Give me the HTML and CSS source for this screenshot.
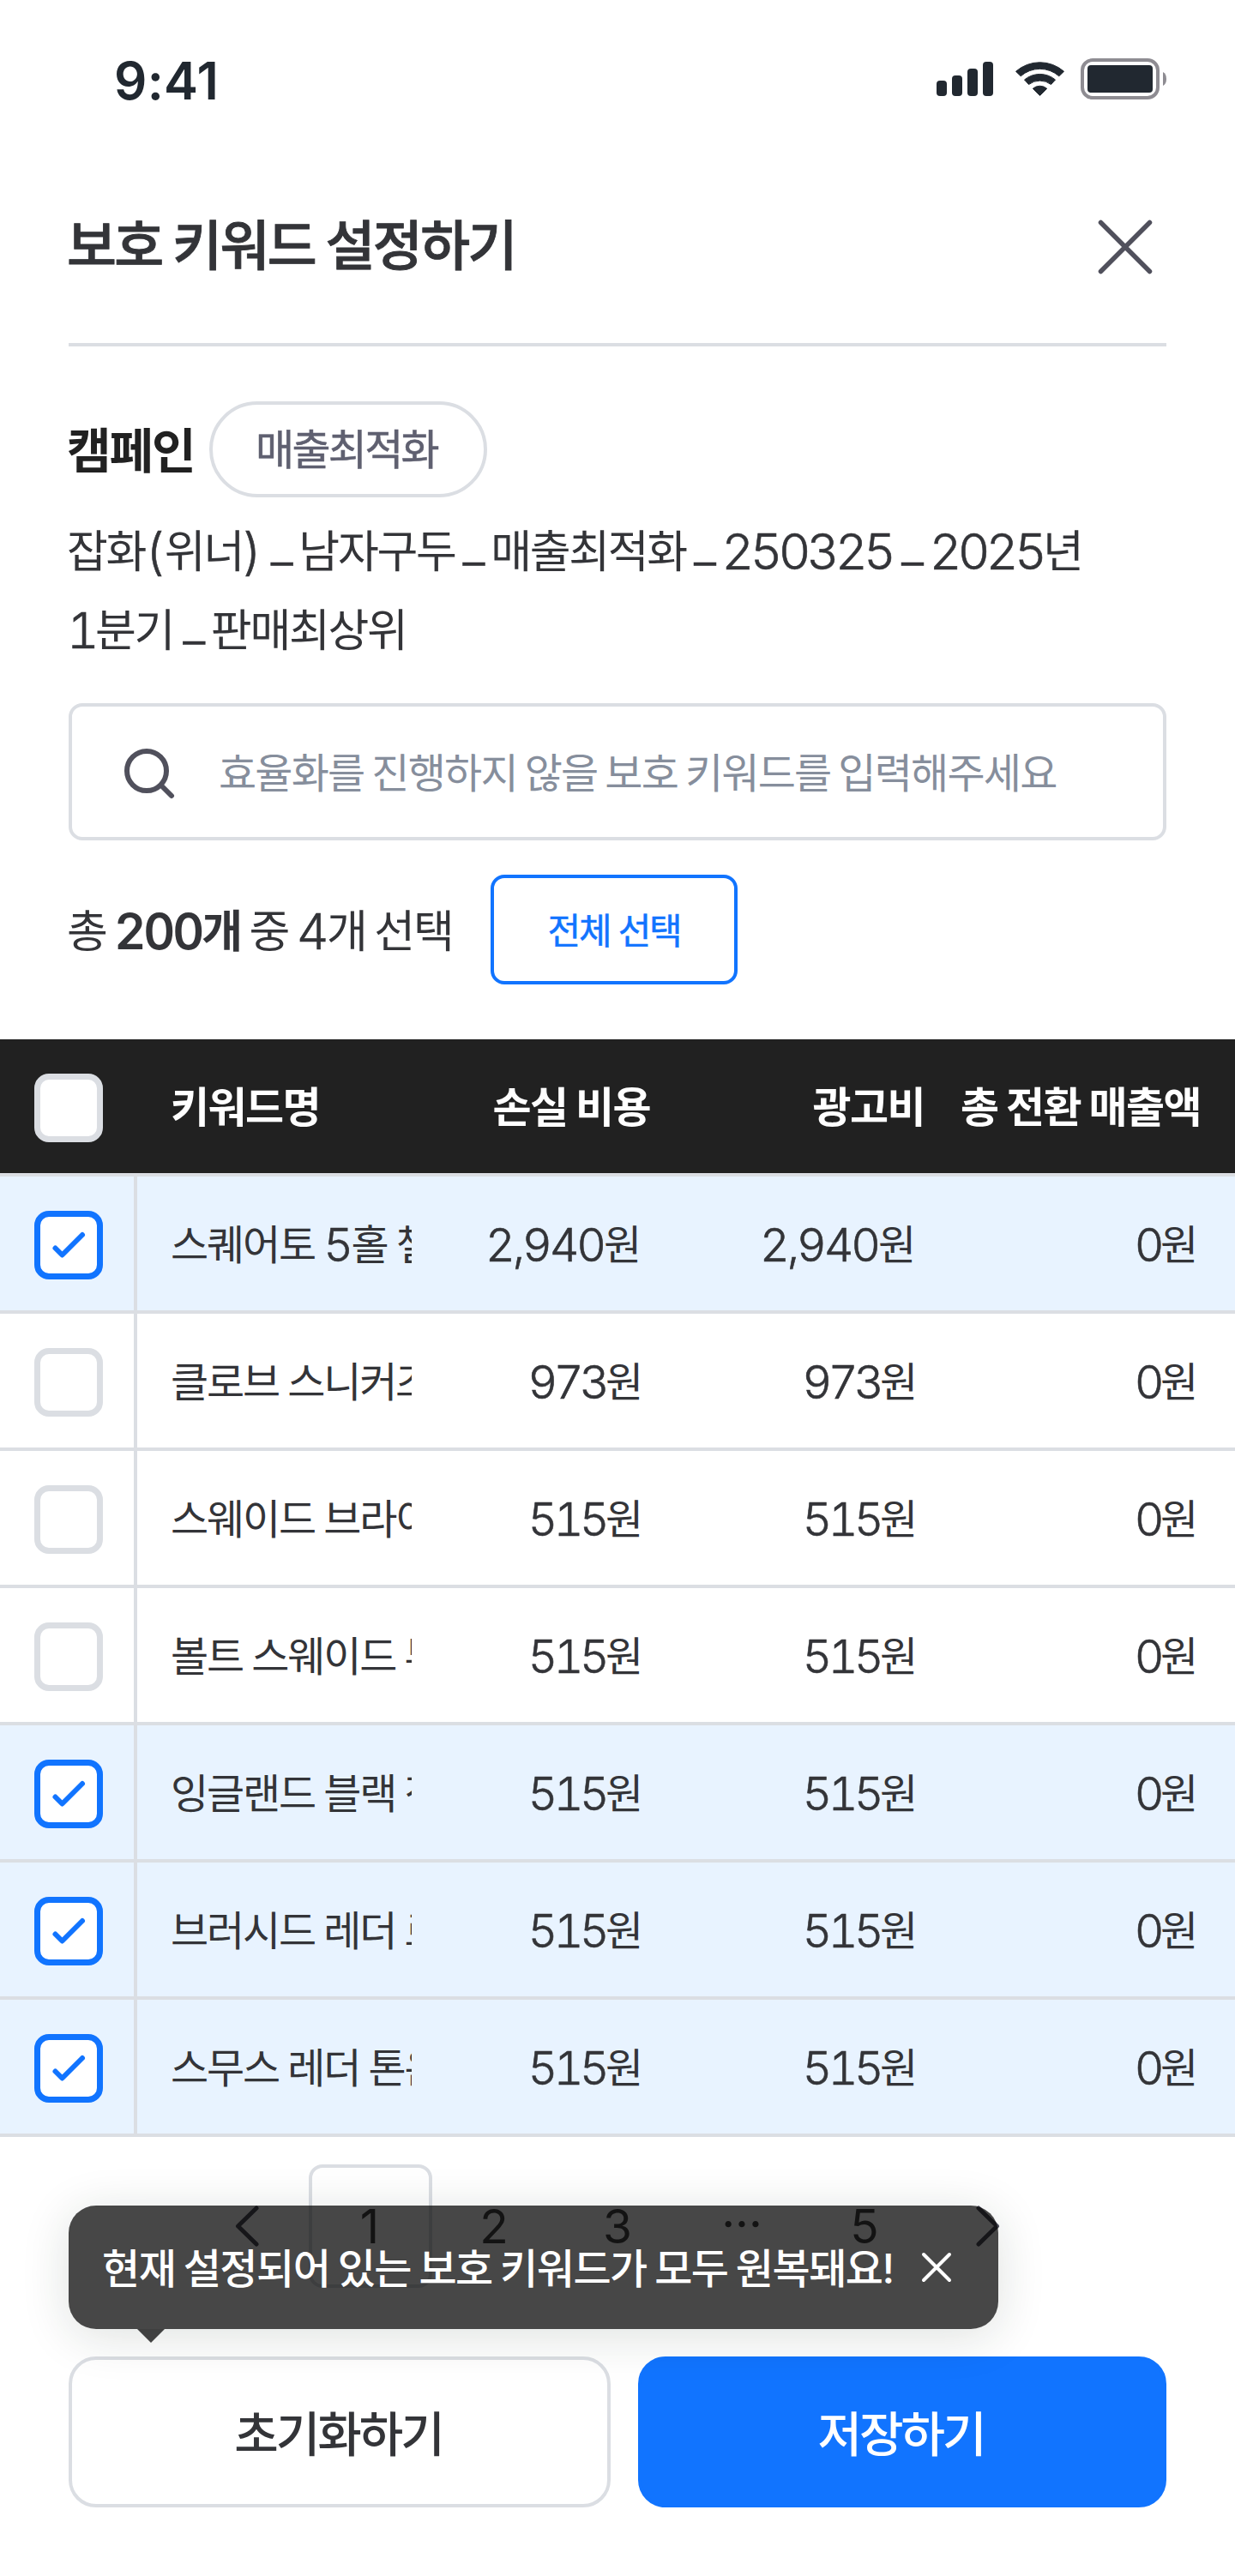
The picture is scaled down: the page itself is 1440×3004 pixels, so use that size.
FILE: index.html
```html
<!DOCTYPE html>
<html lang="ko">
<head>
    <meta charset="UTF-8">
    <meta name="viewport" content="width=device-width, initial-scale=1.0">
    <title>보호 키워드 설정하기</title>
    <link rel="stylesheet" href="styles.css">
</head>
<body>
    <div class="status-bar">
        <span class="time">9:41</span>
        <svg class="status-icons" width="268" height="48" viewBox="0 0 268 48" fill="#212830">
            <rect x="0" y="26" width="12" height="18" rx="4"/>
            <rect x="18" y="20" width="12" height="24" rx="4"/>
            <rect x="36" y="12" width="12" height="32" rx="4"/>
            <rect x="54" y="4" width="12" height="40" rx="4"/>
            <path d="M92.5 15.3A42.4 42.4 0 0 1 148.5 15.3L142.8 20.8A33.7 33.7 0 0 0 98.2 20.8Z" stroke="#212830" stroke-linejoin="round"/>
            <path d="M102.5 25A28 28 0 0 1 138.5 25L133.5 30.5A21.5 21.5 0 0 0 107.5 30.5Z" stroke="#212830" stroke-linejoin="round"/>
            <path d="M112.3 35.3A12.5 12.5 0 0 1 128.7 35.3L120.5 43.5Z" stroke="#212830" stroke-linejoin="round"/>
            <rect x="170" y="2" width="88" height="44" rx="12" fill="none" stroke="#8e8c92" stroke-width="4"/>
            <rect x="176" y="8" width="76" height="32" rx="4"/>
            <path d="M264 16Q268 18 268 24T264 32Z" fill="#8e8c92"/>
        </svg>
    </div>

    <div class="header">
        <h1>보호 키워드 설정하기</h1>
        <svg class="close" width="96" height="96" viewBox="0 0 96 96" fill="none" stroke="#50505c" stroke-width="5.5" stroke-linecap="round">
            <path d="M19.5 19.5L76.5 76.5M76.5 19.5L19.5 76.5"/>
        </svg>
    </div>

    <div class="content">
        <div class="campaign">
            <span class="campaign-label">캠페인</span>
            <span class="tag">매출최적화</span>
        </div>
        <p class="campaign-name">잡화<span class="num paren">(</span>위너<span class="num paren">)</span><span class="bar">_</span>남자구두<span class="bar">_</span>매출최적화<span class="bar">_</span><span class="num">250325</span><span class="bar">_</span><span class="num">2025</span>년<br><span class="num">1</span>분기<span class="bar">_</span>판매최상위</p>
        <div class="search">
            <svg width="64" height="64" viewBox="0 0 64 64" fill="none" stroke="#50505c" stroke-width="6" stroke-linecap="round">
                <circle cx="29" cy="31" r="23"/>
                <path d="M46 48L58 60"/>
            </svg>
            <span>효율화를 진행하지 않을 보호 키워드를 입력해주세요</span>
        </div>
        <div class="count">
            <span class="count-text">총 <b><span class="num">200</span>개</b> 중 <span class="num">4</span>개 선택</span>
            <button class="select-all">전체 선택</button>
        </div>
    </div>

    <div class="table">
        <div class="row head">
            <div class="cell check"><span class="checkbox"></span></div>
            <div class="cell name">키워드명</div>
            <div class="cell price">손실 비용</div>
            <div class="cell price">광고비</div>
            <div class="cell price">총 전환 매출액</div>
        </div>
        <div class="row selected">
            <div class="cell check"><span class="checkbox"><svg viewBox="0 0 80 80"><path d="M24.5 43.5L32.5 51.5L56 28"/></svg></span></div>
            <div class="cell name">스퀘어토 <span class="num">5</span>홀 첼시부츠</div>
            <div class="cell price thousand"><span class="num">2,940</span>원</div>
            <div class="cell price thousand"><span class="num">2,940</span>원</div>
            <div class="cell price"><span class="num">0</span>원</div>
        </div>
        <div class="row">
            <div class="cell check"><span class="checkbox"></span></div>
            <div class="cell name">클로브 스니커즈</div>
            <div class="cell price"><span class="num">973</span>원</div>
            <div class="cell price"><span class="num">973</span>원</div>
            <div class="cell price"><span class="num">0</span>원</div>
        </div>
        <div class="row">
            <div class="cell check"><span class="checkbox"></span></div>
            <div class="cell name">스웨이드 브라이언</div>
            <div class="cell price"><span class="num">515</span>원</div>
            <div class="cell price"><span class="num">515</span>원</div>
            <div class="cell price"><span class="num">0</span>원</div>
        </div>
        <div class="row">
            <div class="cell check"><span class="checkbox"></span></div>
            <div class="cell name">볼트 스웨이드 부츠</div>
            <div class="cell price"><span class="num">515</span>원</div>
            <div class="cell price"><span class="num">515</span>원</div>
            <div class="cell price"><span class="num">0</span>원</div>
        </div>
        <div class="row selected">
            <div class="cell check"><span class="checkbox"><svg viewBox="0 0 80 80"><path d="M24.5 43.5L32.5 51.5L56 28"/></svg></span></div>
            <div class="cell name">잉글랜드 블랙 정장</div>
            <div class="cell price"><span class="num">515</span>원</div>
            <div class="cell price"><span class="num">515</span>원</div>
            <div class="cell price"><span class="num">0</span>원</div>
        </div>
        <div class="row selected">
            <div class="cell check"><span class="checkbox"><svg viewBox="0 0 80 80"><path d="M24.5 43.5L32.5 51.5L56 28"/></svg></span></div>
            <div class="cell name">브러시드 레더 로퍼</div>
            <div class="cell price"><span class="num">515</span>원</div>
            <div class="cell price"><span class="num">515</span>원</div>
            <div class="cell price"><span class="num">0</span>원</div>
        </div>
        <div class="row selected">
            <div class="cell check"><span class="checkbox"><svg viewBox="0 0 80 80"><path d="M24.5 43.5L32.5 51.5L56 28"/></svg></span></div>
            <div class="cell name">스무스 레더 톤온톤</div>
            <div class="cell price"><span class="num">515</span>원</div>
            <div class="cell price"><span class="num">515</span>원</div>
            <div class="cell price"><span class="num">0</span>원</div>
        </div>
    </div>

    <div class="pagination">
        <a class="page"><svg width="48" height="48" viewBox="0 0 48 48"><path d="M35 3L13.5 24L35 45"/></svg></a>
        <a class="page current">1</a>
        <a class="page">2</a>
        <a class="page">3</a>
        <a class="page dots">···</a>
        <a class="page">5</a>
        <a class="page"><svg width="48" height="48" viewBox="0 0 48 48"><path d="M13 3L34.5 24L13 45"/></svg></a>
    </div>

    <div class="actions">
        <div class="tooltip">
            <span>현재 설정되어 있는 보호 키워드가 모두 원복돼요!</span>
            <svg width="40" height="40" viewBox="0 0 40 40" fill="none" stroke="#fff" stroke-width="4" stroke-linecap="round">
                <path d="M5 5L35 35M35 5L5 35"/>
            </svg>
        </div>
        <button class="reset">초기화하기</button>
        <button class="save">저장하기</button>
    </div>
</body>
</html>
```
FILE: styles.css
```css
* {
    box-sizing: border-box;
    word-spacing: -0.058em;
}
body {
    margin: 0;
    background-color: #fff;
    color: #333438;
    font-family: Inter, "Noto Sans CJK KR", sans-serif;
    width: 1440px;
    height: 3004px;
    overflow: hidden;
}
button {
    font-family: inherit;
    background-color: #fff;
    padding: 0;
}
/* latin glyphs sit smaller than hangul, scale them up */
.num {
    font-size: 1.12em;
    font-weight: 300;
    font-variant-numeric: tabular-nums;
    letter-spacing: -4.6px;
    line-height: 0;
    vertical-align: -2px;
    -webkit-text-stroke: 0.6px #333438;
}
.status-bar {
    display: flex;
    justify-content: space-between;
    align-items: center;
    height: 184px;
    padding: 0 80px 0 133px;
}
.time {
    font-size: 60px;
    font-weight: 600;
    color: #212830;
    line-height: 60px;
    padding-top: 4px;
    letter-spacing: 0.3px;
}
.header {
    display: flex;
    justify-content: space-between;
    align-items: center;
    height: 220px;
    margin: 0 80px;
    padding-bottom: 4px;
    border-bottom: 4px solid #dbdee3;
}
.header h1 {
    margin: 0 0 0 -2px;
    padding-bottom: 8px;
    font-size: 63px;
    font-weight: 500;
    line-height: 80px;
    letter-spacing: -2.6px;
    word-spacing: -0.03em;
    -webkit-text-stroke: 0.9px #333438;
}
.header .close {
    margin-bottom: 4px;
}
.content {
    padding: 64px 80px;
}
.campaign {
    display: flex;
    align-items: center;
    height: 112px;
}
.campaign-label {
    width: 166px;
    margin-left: -2px;
    padding-bottom: 5px;
    font-size: 56px;
    font-weight: 700;
    letter-spacing: -2px;
    color: #212121;
}
.tag {
    width: 324px;
    height: 112px;
    padding-left: 50px;
    border: 4px solid #dbdee3;
    border-radius: 56px;
    font-size: 49px;
    line-height: 105px;
    letter-spacing: -2.7px;
    color: #5f6070;
    -webkit-text-stroke: 0.5px #5f6070;
}
.campaign-name {
    margin: 18px 0 38px -2px;
    font-size: 52px;
    line-height: 92px;
    letter-spacing: -2.3px;
    white-space: nowrap;
}
.num.paren {
    letter-spacing: 0;
}
.bar {
    font-size: 58px;
    font-weight: 300;
    line-height: 0;
    vertical-align: 6px;
    margin: 0 9px;
    -webkit-text-stroke: 0.5px #333438;
}
.num + .bar {
    margin-left: 11px;
}
.paren + .bar {
    margin-left: 10px;
}
.search {
    display: flex;
    align-items: center;
    gap: 49px;
    height: 160px;
    padding: 0 58px;
    border: 4px solid #dbdee3;
    border-radius: 16px;
    font-size: 48px;
    letter-spacing: -1.8px;
    color: #868e9c;
    white-space: nowrap;
}
.search span {
    padding-bottom: 4px;
}
.count {
    display: flex;
    align-items: center;
    margin-top: 40px;
    height: 128px;
}
.count-text {
    width: 494px;
    margin-left: -2px;
    padding-bottom: 4px;
    font-size: 52px;
    letter-spacing: -2.1px;
    white-space: nowrap;
}
.count-text .num {
    letter-spacing: -2.5px;
}
.count-text b {
    font-weight: 600;
}
.count-text b .num {
    font-size: 1.1em;
    font-weight: 600;
    letter-spacing: -3px;
    -webkit-text-stroke: 0;
}
.select-all {
    width: 288px;
    height: 128px;
    padding-bottom: 4px;
    border: 4px solid #1174ff;
    border-radius: 16px;
    font-size: 42px;
    letter-spacing: -2.3px;
    word-spacing: 0;
    color: #1174ff;
    -webkit-text-stroke: 0.5px #1174ff;
}
.row {
    display: grid;
    grid-template-columns: 160px repeat(4, 320px);
    grid-template-rows: 156px;
    height: 160px;
    border-bottom: 4px solid #dbdee3;
}
.row.head {
    background-color: #212121;
    color: #fff;
    font-weight: 700;
}
.row.selected {
    background-color: #e8f3ff;
}
.cell {
    font-size: 48px;
    line-height: 159px;
    letter-spacing: -2.2px;
    word-spacing: -0.02em;
    white-space: pre;
    overflow: hidden;
}
.head .cell {
    font-size: 49px;
    letter-spacing: -1.6px;
    word-spacing: -0.01em;
}
.cell.check {
    display: flex;
    align-items: center;
    padding: 4px 0 0 40px;
    border-right: 4px solid #dbdee3;
}
.head .cell.check {
    border-right: none;
}
.name {
    padding-left: 39px;
}
.name .num {
    letter-spacing: -2.5px;
}
.price {
    padding-right: 52px;
    text-align: right;
}
.thousand {
    padding-right: 54px;
}
.thousand .num {
    letter-spacing: -3.1px;
}
.price:last-child {
    padding-right: 45px;
}
.head .price {
    padding-right: 42px;
}
.head .price:last-child {
    padding-right: 40px;
}
.checkbox {
    width: 80px;
    height: 80px;
    border: 7px solid #dbdee3;
    border-radius: 17px;
    background-color: #fff;
}
.selected .checkbox {
    border-color: #1174ff;
}
.checkbox svg {
    display: block;
    width: 80px;
    height: 80px;
    margin: -7px;
    fill: none;
    stroke: #1174ff;
    stroke-width: 6;
    stroke-linecap: round;
    stroke-linejoin: round;
}
.pagination {
    display: flex;
    justify-content: center;
    margin-top: 32px;
}
.page {
    display: flex;
    align-items: center;
    justify-content: center;
    width: 144px;
    height: 144px;
    font-size: 55px;
    color: #474747;
}
.page.current {
    border: 4px solid #dbdee3;
    border-radius: 16px;
    padding-right: 2px;
}
.page.dots {
    padding: 0 0 6px 2px;
}
.page svg {
    fill: none;
    stroke: #50505c;
    stroke-width: 5;
    stroke-linecap: round;
    stroke-linejoin: round;
}
.actions {
    position: relative;
    display: flex;
    gap: 32px;
    margin: 80px 80px 0;
}
.tooltip {
    position: absolute;
    left: 0;
    bottom: calc(100% + 32px);
    display: flex;
    align-items: center;
    gap: 30px;
    width: 1084px;
    height: 144px;
    padding-left: 39px;
    border-radius: 32px;
    background-color: rgba(0, 0, 0, 0.72);
    box-shadow: 0 8px 56px rgba(20, 40, 30, 0.14);
    color: #fff;
    font-size: 48px;
    font-weight: 500;
    letter-spacing: -1.5px;
    white-space: nowrap;
}
.tooltip span {
    padding-bottom: 5px;
    word-spacing: -0.04em;
}
.tooltip::after {
    content: "";
    position: absolute;
    left: 80px;
    top: 100%;
    border: 16px solid transparent;
    border-top-color: rgba(0, 0, 0, 0.73);
    border-bottom: none;
}
.reset, .save {
    width: 632px;
    height: 176px;
    padding: 0 3px 4px 0;
    border: 4px solid #dbdee3;
    border-radius: 32px;
    font-size: 56px;
    font-weight: 500;
    letter-spacing: -3px;
    color: #333438;
}
.save {
    width: 616px;
    background-color: #1174ff;
    border-color: #1174ff;
    color: #fff;
}
```
